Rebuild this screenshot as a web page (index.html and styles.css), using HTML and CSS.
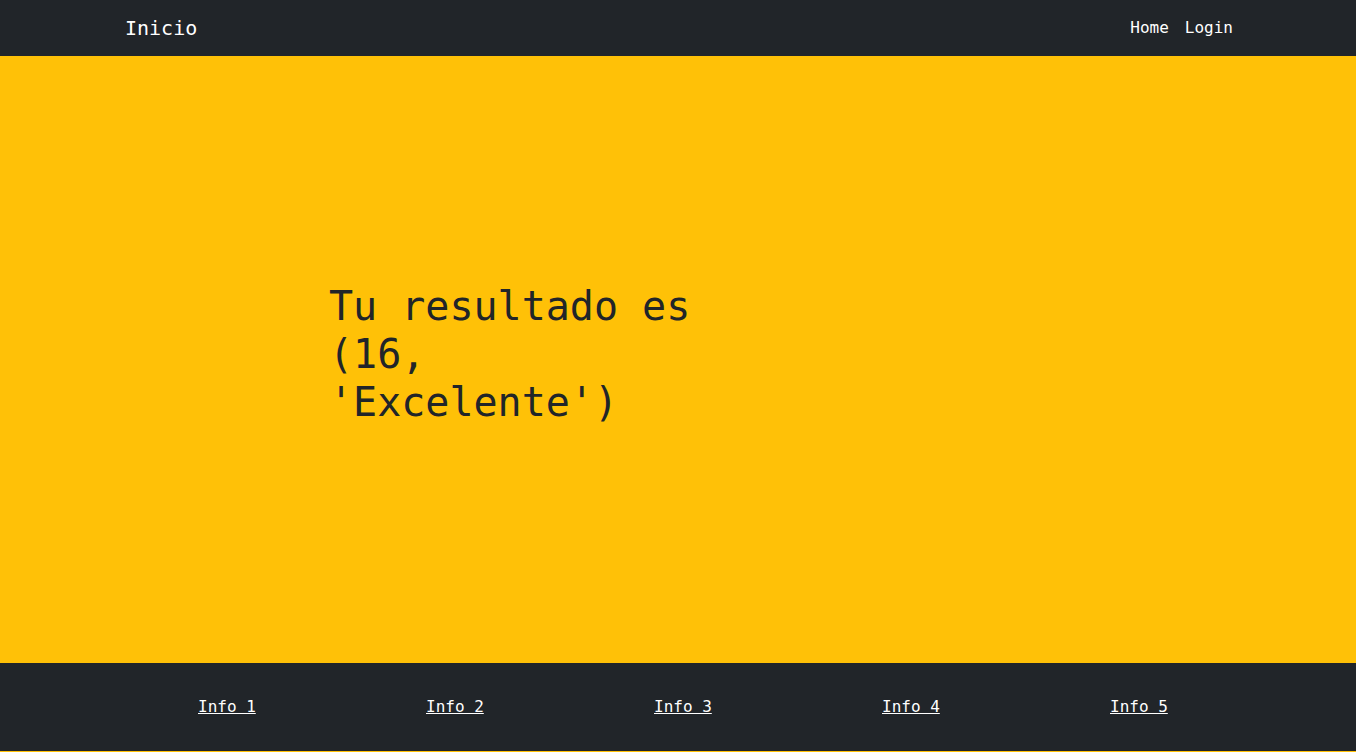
FILE: index.html
```html
<!DOCTYPE html>
<html lang="es">
<head>
<meta charset="utf-8">
<title>Inicio</title>
<link rel="stylesheet" href="styles.css">
</head>
<body>
<nav class="navbar">
  <div class="nav-inner">
    <a class="brand" href="#">Inicio</a>
    <ul class="nav-links">
      <li><a href="#">Home</a></li>
      <li><a href="#">Login</a></li>
    </ul>
  </div>
</nav>
<main class="hero">
  <h1 class="result">Tu resultado es (16, 'Excelente')</h1>
</main>
<footer class="footer">
  <ul class="footer-links">
    <li><a href="#">Info 1</a></li>
    <li><a href="#">Info 2</a></li>
    <li><a href="#">Info 3</a></li>
    <li><a href="#">Info 4</a></li>
    <li><a href="#">Info 5</a></li>
  </ul>
</footer>
</body>
</html>
```
FILE: styles.css
```css
* { box-sizing: border-box; }
html, body { margin: 0; padding: 0; }
body {
  background: #ffc107;
  font-family: "DejaVu Sans Mono", monospace;
  color: #212529;
  height: 752px;
  overflow: hidden;
}
.navbar {
  background: #212529;
  height: 56px;
  display: flex;
  align-items: center;
}
.nav-inner {
  width: 1110px;
  margin: 0 auto;
  display: flex;
  align-items: center;
  justify-content: space-between;
}
.brand {
  color: #fff;
  text-decoration: none;
  font-size: 20px;
  line-height: 30px;
  padding-left: 2px;
}
.nav-links {
  list-style: none;
  margin: 0;
  padding: 0;
  display: flex;
  gap: 16px;
}
.nav-links a {
  color: #fff;
  text-decoration: none;
  font-size: 16px;
  line-height: 24px;
}
.hero {
  height: 607px;
  display: flex;
  align-items: center;
  padding-left: 329px;
  padding-bottom: 12px;
}
.result {
  margin: 0;
  width: 400px;
  font-size: 40px;
  font-weight: 400;
  line-height: 48px;
  color: #212529;
}
.footer {
  background: #212529;
  height: 88px;
  display: flex;
  align-items: center;
}
.footer-links {
  list-style: none;
  margin: 0;
  padding: 0 0 0 198px;
  display: grid;
  grid-template-columns: repeat(5, 228px);
}
.footer-links a {
  color: #fff;
  font-size: 16px;
  line-height: 24px;
  text-decoration: underline;
}
```
